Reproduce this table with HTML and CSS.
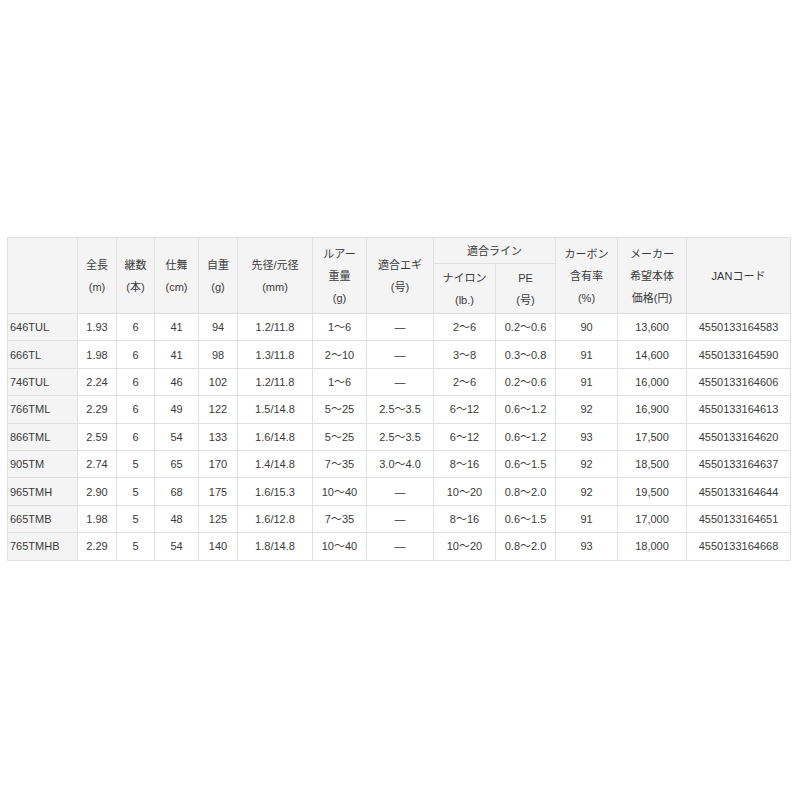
FILE: index.html
```html
<!DOCTYPE html>
<html lang="ja">
<head>
<meta charset="utf-8">
<link rel="stylesheet" href="styles.css">
</head>
<body>
<div class="wrap">
<table class="spec">
<colgroup>
<col class="c0"><col class="c1"><col class="c2"><col class="c3"><col class="c4"><col class="c5"><col class="c6"><col class="c7"><col class="c8"><col class="c9"><col class="c10"><col class="c11"><col class="c12">
</colgroup>
<thead>
<tr class="h1">
<th rowspan="2"></th>
<th rowspan="2">全長<br>(m)</th>
<th rowspan="2">継数<br>(本)</th>
<th rowspan="2">仕舞<br>(cm)</th>
<th rowspan="2">自重<br>(g)</th>
<th rowspan="2">先径/元径<br>(mm)</th>
<th rowspan="2" class="tri">ルアー<br>重量<br>(g)</th>
<th rowspan="2">適合エギ<br>(号)</th>
<th colspan="2">適合ライン</th>
<th rowspan="2" class="tri">カーボン<br>含有率<br>(%)</th>
<th rowspan="2" class="tri">メーカー<br>希望本体<br>価格(円)</th>
<th rowspan="2">JANコード</th>
</tr>
<tr class="h2">
<th>ナイロン<br>(lb.)</th>
<th>PE<br>(号)</th>
</tr>
</thead>
<tbody>
<tr><th>646TUL</th><td>1.93</td><td>6</td><td>41</td><td>94</td><td>1.2/11.8</td><td>1～6</td><td>—</td><td>2～6</td><td>0.2～0.6</td><td>90</td><td>13,600</td><td>4550133164583</td></tr>
<tr><th>666TL</th><td>1.98</td><td>6</td><td>41</td><td>98</td><td>1.3/11.8</td><td>2～10</td><td>—</td><td>3～8</td><td>0.3～0.8</td><td>91</td><td>14,600</td><td>4550133164590</td></tr>
<tr><th>746TUL</th><td>2.24</td><td>6</td><td>46</td><td>102</td><td>1.2/11.8</td><td>1～6</td><td>—</td><td>2～6</td><td>0.2～0.6</td><td>91</td><td>16,000</td><td>4550133164606</td></tr>
<tr><th>766TML</th><td>2.29</td><td>6</td><td>49</td><td>122</td><td>1.5/14.8</td><td>5～25</td><td>2.5～3.5</td><td>6～12</td><td>0.6～1.2</td><td>92</td><td>16,900</td><td>4550133164613</td></tr>
<tr><th>866TML</th><td>2.59</td><td>6</td><td>54</td><td>133</td><td>1.6/14.8</td><td>5～25</td><td>2.5～3.5</td><td>6～12</td><td>0.6～1.2</td><td>93</td><td>17,500</td><td>4550133164620</td></tr>
<tr><th>905TM</th><td>2.74</td><td>5</td><td>65</td><td>170</td><td>1.4/14.8</td><td>7～35</td><td>3.0～4.0</td><td>8～16</td><td>0.6～1.5</td><td>92</td><td>18,500</td><td>4550133164637</td></tr>
<tr><th>965TMH</th><td>2.90</td><td>5</td><td>68</td><td>175</td><td>1.6/15.3</td><td>10～40</td><td>—</td><td>10～20</td><td>0.8～2.0</td><td>92</td><td>19,500</td><td>4550133164644</td></tr>
<tr><th>665TMB</th><td>1.98</td><td>5</td><td>48</td><td>125</td><td>1.6/12.8</td><td>7～35</td><td>—</td><td>8～16</td><td>0.6～1.5</td><td>91</td><td>17,000</td><td>4550133164651</td></tr>
<tr><th>765TMHB</th><td>2.29</td><td>5</td><td>54</td><td>140</td><td>1.8/14.8</td><td>10～40</td><td>—</td><td>10～20</td><td>0.8～2.0</td><td>93</td><td>18,000</td><td>4550133164668</td></tr>
</tbody>
</table>
</div>
</body>
</html>
```

FILE: styles.css
```css
html, body {
  margin: 0;
  padding: 0;
  background: #ffffff;
}
.wrap {
  padding: 237px 0 0 7px;
}
.spec {
  border-collapse: collapse;
  table-layout: fixed;
  width: 784px;
  font-family: "Liberation Sans", "Noto Sans CJK JP", sans-serif;
  font-size: 11px;
  color: #3a3a3a;
}
.c0 { width: 70px; }
.c1 { width: 39px; }
.c2 { width: 38px; }
.c3 { width: 44px; }
.c4 { width: 39px; }
.c5 { width: 75px; }
.c6 { width: 54px; }
.c7 { width: 67px; }
.c8 { width: 62px; }
.c9 { width: 60px; }
.c10 { width: 62px; }
.c11 { width: 69px; }
.c12 { width: 104px; }
.spec th, .spec td {
  border: 1px solid #e0e0e0;
  padding: 0;
  text-align: center;
  vertical-align: middle;
  font-weight: normal;
}
.spec thead th {
  background: #f4f4f4;
  line-height: 22px;
}
.spec .h1 th { height: 25px; }
.spec .h2 th { height: 49px; }
.spec tbody th {
  background: #f4f4f4;
  text-align: left;
  padding-left: 2px;
}
.spec tbody td, .spec tbody th {
  height: 26.4px;
  line-height: 14px;
}
```
